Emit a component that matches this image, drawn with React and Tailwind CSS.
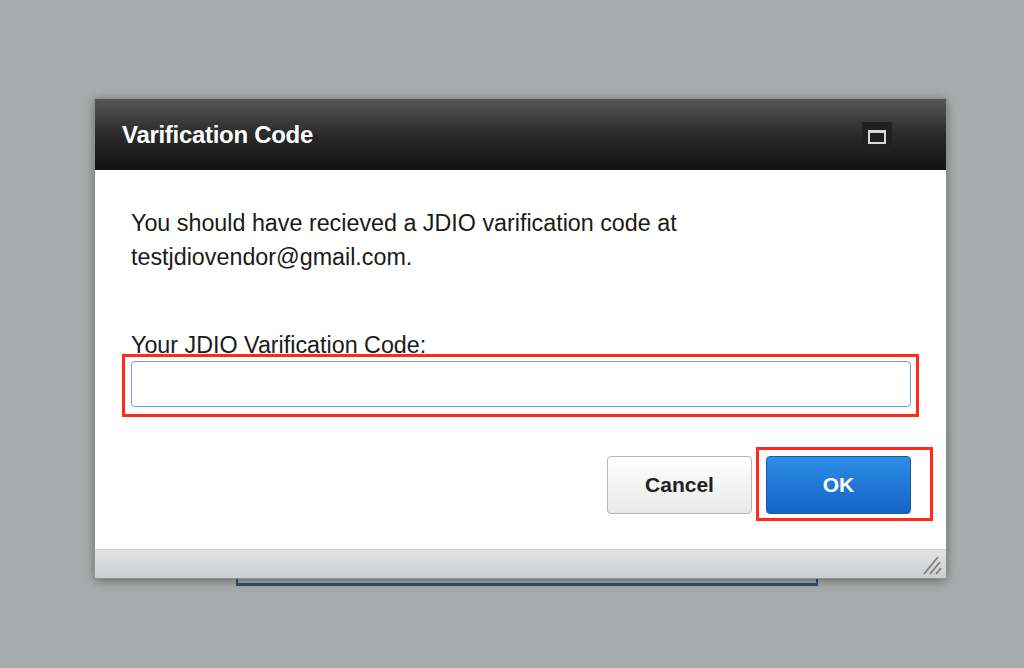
import React from "react";

export default function App() {
  return (
    <div
      className="relative w-[1024px] h-[668px] overflow-hidden bg-[#a9aaab]"
      style={{ fontFamily: '"Liberation Sans", Arial, Helvetica, sans-serif' }}
    >
      {/* underlying element bottom border peeking under dialog */}
      <div className="absolute left-[236px] top-[560px] w-[582px] h-[26px] border-x-2 border-b-[3px] border-[#2f5478]" />

      <div className="relative pt-[99px] pl-[95px]">
        <div className="relative w-[851px] h-[479px] flex flex-col shadow-[0_2px_10px_rgba(0,0,0,0.45)] outline outline-1 outline-[#8f9090]">
          {/* header */}
          <div className="h-[71px] flex items-center justify-between pl-[27px] pr-[54px] bg-gradient-to-b from-[#575757] via-[#2a2a2a] to-[#121212]">
            <span className="text-white font-bold text-[24px] tracking-[-0.3px] mt-[1px]">
              Varification Code
            </span>
            <div className="w-[30px] h-[31px] mt-[5px] bg-[#1f2121] flex items-center justify-center">
              <div className="w-[18px] h-[14px] border-2 border-t-[3px] border-[#d9d9d9]" />
            </div>
          </div>

          {/* body */}
          <div className="flex-1 bg-white flex flex-col pl-[36px] pr-[35px] pt-[36px]">
            <p className="text-[23.3px] leading-[34px] text-[#1a1a1a]">
              You should have recieved a JDIO varification code at
              <br />
              testjdiovendor@gmail.com.
            </p>
            <label className="mt-[58px] text-[23.3px] leading-[26px] text-[#1a1a1a]">
              Your JDIO Varification Code:
            </label>
            <input
              type="text"
              className="mt-[3px] h-[46px] w-[780px] rounded-[4px] border-[1.5px] border-[#6f9fd8] bg-white outline-none"
            />
            <div className="mt-[49px] flex justify-end gap-[14px]">
              <button className="w-[145px] h-[58px] rounded-[4px] border border-[#b5b5b5] bg-gradient-to-b from-[#ffffff] to-[#e9e9e9] text-[21px] font-bold text-[#222]">
                Cancel
              </button>
              <button className="w-[145px] h-[58px] rounded-[4px] border border-[#1858a8] bg-gradient-to-b from-[#2e8ee6] to-[#1563c4] text-[21px] font-bold text-white">
                OK
              </button>
            </div>
          </div>

          {/* footer */}
          <div className="relative h-[29px] border-t border-[#d6d6d6] bg-gradient-to-b from-[#e2e3e4] to-[#cdcecf]">
            <svg className="absolute right-[3px] bottom-[2px]" width="22" height="22" viewBox="0 0 22 22">
              <path d="M3 20 L17 3" stroke="#7d7d7d" strokeWidth="1.8" />
              <path d="M9 20 L19 8" stroke="#7d7d7d" strokeWidth="1.8" />
              <path d="M15 20 L20 14" stroke="#7d7d7d" strokeWidth="1.8" />
            </svg>
          </div>
        </div>

        {/* red annotation boxes */}
        <div className="absolute left-[122px] top-[354px] w-[797px] h-[63px] border-[3px] border-[#ff2a1c]" />
        <div className="absolute left-[756px] top-[447px] w-[177px] h-[74px] border-[3px] border-[#ff2a1c]" />
      </div>
    </div>
  );
}
